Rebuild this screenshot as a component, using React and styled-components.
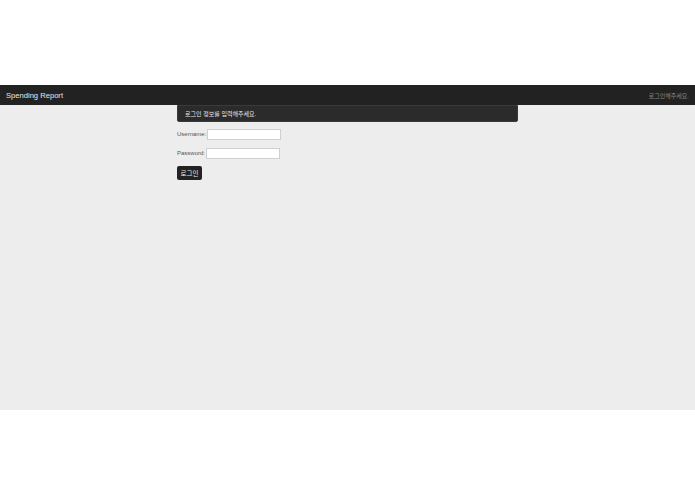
import React from 'react';
import styled, { createGlobalStyle } from 'styled-components';

const GlobalStyle = createGlobalStyle`
  html, body {
    margin: 0;
    padding: 0;
    background: #ffffff;
    font-family: "Liberation Sans", Arial, "Noto Sans CJK KR", sans-serif;
  }
`;

const Page = styled.div`
  padding-top: 85px;
  padding-bottom: 85px;
`;

const NavBar = styled.header`
  display: flex;
  justify-content: space-between;
  align-items: center;
  height: 20px;
  padding: 0 6px;
  background-color: #222222;
`;

const Brand = styled.span`
  font-size: 7.6px;
  color: #e6e6e6;
`;

const NavNote = styled.span`
  font-size: 6px;
  color: #8a8a8a;
  font-family: "Liberation Sans", "Noto Sans CJK KR", sans-serif;
`;

const Main = styled.main`
  height: 305px;
  background-color: #ededed;
`;

const Container = styled.div`
  width: 341px;
  margin: 0 auto;
`;

const Alert = styled.div`
  height: 17px;
  display: flex;
  align-items: center;
  padding: 0 7px;
  background-color: #2b2b2b;
  border: 1px solid #3a3a3a;
  border-radius: 0 0 2px 2px;
  color: #e8e8e8;
  font-size: 6px;
  font-family: "Liberation Sans", "Noto Sans CJK KR", sans-serif;
  box-sizing: border-box;
`;

const Form = styled.form`
  display: flex;
  flex-direction: column;
  align-items: flex-start;
  gap: 7px;
  padding-top: 6px;
`;

const Field = styled.label`
  display: flex;
  align-items: center;
  gap: 0;
  font-size: 6px;
  color: #555555;
  height: 12px;
`;

const Input = styled.input`
  width: 74px;
  height: 11px;
  padding: 0;
  margin: 0 0 0 1px;
  border: 1px solid #cfcfcf;
  background: #ffffff;
  box-sizing: border-box;
`;

const Button = styled.button`
  width: 25px;
  height: 14px;
  padding: 0;
  border: none;
  border-radius: 2px;
  background-color: #222222;
  color: #e8e8e8;
  font-size: 6.5px;
  font-family: "Liberation Sans", "Noto Sans CJK KR", sans-serif;
`;

const App = () => (
  <>
    <GlobalStyle />
    <Page>
      <NavBar>
        <Brand>Spending Report</Brand>
        <NavNote>로그인해주세요.</NavNote>
      </NavBar>
      <Main>
        <Container>
          <Alert>로그인 정보를 입력해주세요.</Alert>
          <Form onSubmit={(e) => e.preventDefault()}>
            <Field>
              Username:<Input type="text" />
            </Field>
            <Field>
              Password:<Input type="password" />
            </Field>
            <Button type="submit">로그인</Button>
          </Form>
        </Container>
      </Main>
    </Page>
  </>
);

export default App;
